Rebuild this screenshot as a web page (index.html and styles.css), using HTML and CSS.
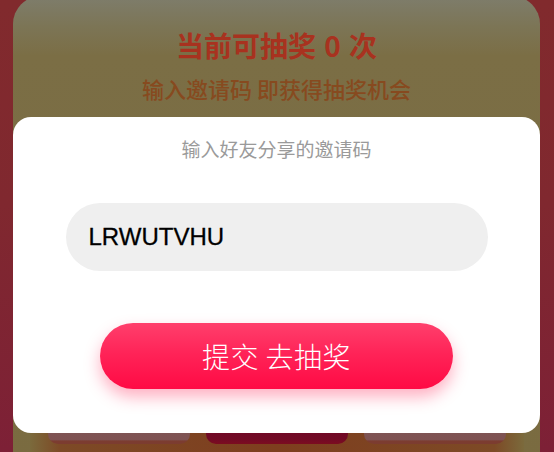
FILE: index.html
```html
<!DOCTYPE html>
<html lang="zh-CN">
<head>
<meta charset="utf-8">
<title>抽奖</title>
<link rel="stylesheet" href="styles.css">
</head>
<body>
<div class="page">
  <div class="panel">
    <div class="count">当前可抽奖 0 次</div>
    <div class="sub">输入邀请码 即获得抽奖机会</div>
    <div class="board">
      <div class="cell side"></div>
      <div class="cell main"></div>
      <div class="cell side"></div>
    </div>
  </div>
  <div class="modal">
    <div class="modal-title">输入好友分享的邀请码</div>
    <div class="code-input">LRWUTVHU</div>
    <div class="submit">提交 去抽奖</div>
  </div>
</div>
</body>
</html>
```

FILE: styles.css
```css
html, body {
  margin: 0;
  padding: 0;
}
body {
  width: 554px;
  height: 452px;
  overflow: hidden;
  background: linear-gradient(180deg, #812a2d 0%, #80282f 45%, #7d2036 100%);
  font-family: "Noto Sans CJK SC", "Noto Sans", sans-serif;
}
.page {
  position: relative;
  display: flow-root;
  height: 452px;
  padding: 0 14px 0 13px;
}
.panel {
  margin-top: -4px;
  height: 470px;
  border-radius: 28px 28px 0 0;
  background: linear-gradient(180deg, #7e7d6c 0px, #7c7556 30px, #7b6e45 60px, #7a6b40 100%);
  display: flex;
  flex-direction: column;
  align-items: center;
  padding-top: 29px;
  box-sizing: border-box;
}
.count {
  font-size: 28px;
  line-height: 40px;
  font-weight: 700;
  color: #a8321f;
  word-spacing: 2px;
}
.sub {
  margin-top: 8px;
  font-size: 22px;
  line-height: 30px;
  font-weight: 500;
  color: #874a1f;
}
.board {
  margin-top: 321px;
  width: 494px;
  height: 40px;
  border-radius: 10px;
  background: linear-gradient(90deg, #7b6a3c 0%, #7d4a26 6%, #7e3e1e 50%, #7d4a26 94%, #7b6a3c 100%);
  display: flex;
  gap: 16px;
  padding: 0 18px;
  box-sizing: border-box;
}
.cell {
  flex: 1;
  height: 20px;
  border-radius: 0 0 10px 10px;
}
.side {
  background: linear-gradient(180deg, #7f5656 0%, #7e5252 80%, #7c3c30 84%, #7c3c30 100%);
}
.main {
  background: linear-gradient(180deg, #6e0826 0%, #720a25 75%, #7c0c20 100%);
}
.modal {
  position: absolute;
  left: 13px;
  top: 117px;
  width: 527px;
  height: 316px;
  background: #ffffff;
  border-radius: 18px;
  display: flex;
  flex-direction: column;
  align-items: center;
  padding-top: 18px;
  box-sizing: border-box;
}
.modal-title {
  font-size: 19px;
  line-height: 28px;
  color: #9a9a9a;
}
.code-input {
  margin-top: 40px;
  width: 422px;
  height: 68px;
  border-radius: 34px;
  background: #efefef;
  box-sizing: border-box;
  padding-left: 23px;
  display: flex;
  align-items: center;
  font-family: "Liberation Sans", Arial, sans-serif;
  font-size: 24px;
  color: #000000;
  -webkit-text-stroke: 0.3px #000000;
}
.submit {
  margin-top: 52px;
  width: 353px;
  height: 66px;
  border-radius: 33px;
  background: linear-gradient(180deg, #ff3f6c 0%, #ff2458 45%, #ff0a44 100%);
  box-shadow: 0 8px 16px rgba(255, 30, 80, 0.35);
  display: flex;
  align-items: center;
  justify-content: center;
  color: #ffffff;
  font-size: 28px;
  font-weight: 300;
  letter-spacing: 0.5px;
}
```
